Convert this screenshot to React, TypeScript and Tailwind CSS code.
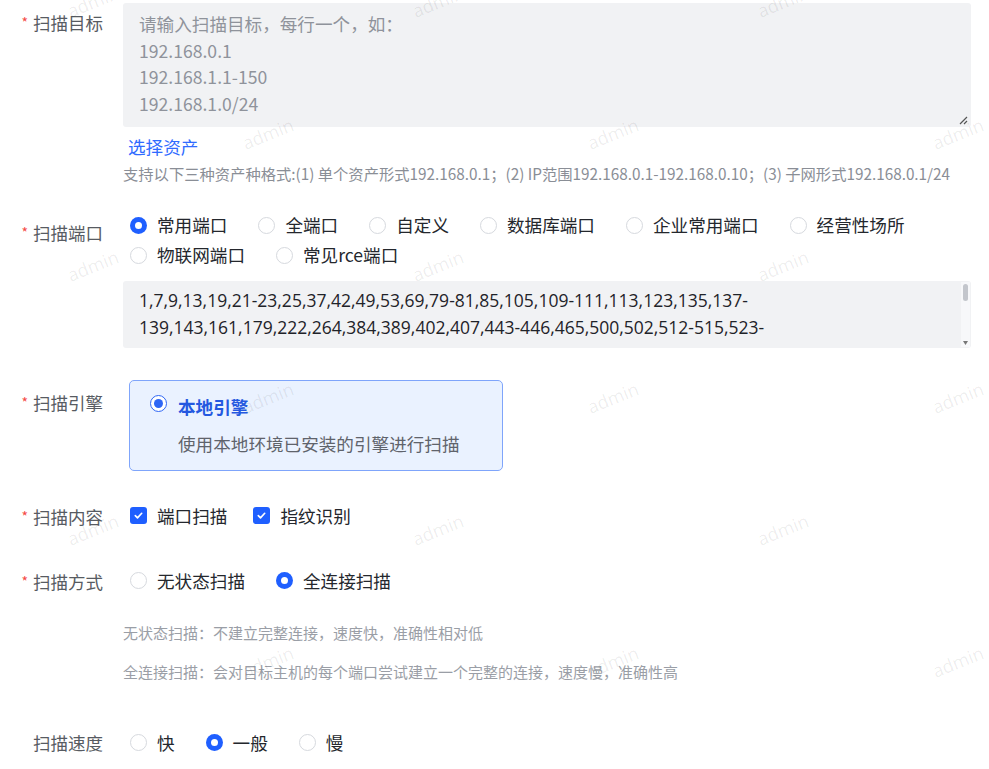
import React from 'react';

const portLines = [
  '1,7,9,13,19,21-23,25,37,42,49,53,69,79-81,85,105,109-111,113,123,135,137-',
  '139,143,161,179,222,264,384,389,402,407,443-446,465,500,502,512-515,523-',
];

const Radio = ({ checked = false }: { checked?: boolean }) =>
  checked ? (
    <span className="flex h-[17px] w-[17px] shrink-0 items-center justify-center rounded-full bg-[#1f5fff]">
      <span className="h-[7px] w-[7px] rounded-full bg-white" />
    </span>
  ) : (
    <span className="h-[17px] w-[17px] shrink-0 rounded-full border border-[#d6d9de] bg-white" />
  );

const Checkbox = () => (
  <span className="flex h-[17px] w-[17px] shrink-0 items-center justify-center rounded-[3px] bg-[#1f5fff]">
    <svg width="11" height="11" viewBox="0 0 12 12" fill="none">
      <path d="M2.5 6.2l2.4 2.4 4.6-5" stroke="white" strokeWidth="1.8" strokeLinecap="round" strokeLinejoin="round" />
    </svg>
  </span>
);

const Option = ({ text, checked }: { text: string; checked?: boolean }) => (
  <label className="flex items-center gap-[10px] whitespace-nowrap">
    <Radio checked={checked} />
    <span>{text}</span>
  </label>
);

const FieldLabel = ({ text, required = true }: { text: string; required?: boolean }) => (
  <div className="h-[44px] w-[123px] shrink-0 pr-[20px] text-right text-[17.5px] leading-[44px] text-[#575b62]">
    {required && <span className="mr-[5px] text-[14px] text-[#f54a45] align-[2px]">*</span>}
    {text}
  </div>
);

const Watermarks = () => {
  const marks: { x: number; y: number }[] = [];
  for (let row = 0; row < 7; row++) {
    const start = row % 2 === 0 ? 93 : 268;
    for (let col = 0; col < 3; col++) {
      marks.push({ x: start + col * 345, y: 2 + row * 132 });
    }
  }
  return (
    <div className="pointer-events-none absolute inset-0 overflow-hidden">
      {marks.map((m, i) => (
        <span
          key={i}
          className="absolute -translate-x-1/2 -translate-y-1/2 -rotate-[22deg] font-['Open_Sans',sans-serif] text-[18px] text-[rgba(0,0,0,0.08)]"
          style={{ left: m.x, top: m.y }}
        >
          admin
        </span>
      ))}
    </div>
  );
};

export default function App() {
  return (
    <div className="relative h-[769px] w-[989px] overflow-hidden bg-white pr-[18px] pt-[3px] font-['Noto_Sans_CJK_SC','Noto_Sans',sans-serif] text-[17.6px] text-[#24272d]">
      {/* 扫描目标 */}
      <div className="flex">
        <div className="mt-[-3px]">
          <FieldLabel text="扫描目标" />
        </div>
        <div className="flex-1">
          <div className="relative h-[124px] rounded-[3px] bg-[#f1f2f4] px-[16px] pt-[8px] leading-[26.5px] text-[#8f939b]">
            <div>请输入扫描目标，每行一个，如：</div>
            <div>192.168.0.1</div>
            <div>192.168.1.1-150</div>
            <div>192.168.1.0/24</div>
            <svg className="absolute bottom-[2px] right-[3px]" width="10" height="10" viewBox="0 0 10 10">
              <path d="M9 2L2 9M9 6L6 9" stroke="#555" strokeWidth="1.2" />
            </svg>
          </div>
          <div className="ml-[5px] mt-[7px] h-[26px] leading-[26px] text-[#2f6bff]">选择资产</div>
          <div className="mt-[2px] h-[22px] whitespace-nowrap text-[15.3px] leading-[22px] text-[#8a8e96]">
            支持以下三种资产种格式:(1) 单个资产形式192.168.0.1；(2) IP范围192.168.0.1-192.168.0.10；(3) 子网形式192.168.0.1/24
          </div>
        </div>
      </div>

      {/* 扫描端口 */}
      <div className="mt-[26px] flex">
        <FieldLabel text="扫描端口" />
        <div className="flex-1">
          <div className="ml-[7px] flex flex-wrap gap-x-[31px] leading-[30px]">
            <Option text="常用端口" checked />
            <Option text="全端口" />
            <Option text="自定义" />
            <Option text="数据库端口" />
            <Option text="企业常用端口" />
            <Option text="经营性场所" />
            <Option text="物联网端口" />
            <Option text="常见rce端口" />
          </div>
          <div className="relative mt-[11px] h-[67px] overflow-hidden rounded-[3px] bg-[#f1f2f4] px-[16px] pt-[6px] font-['Open_Sans','Noto_Sans',sans-serif] text-[17.5px] leading-[27px] text-[#1f2329]">
            {portLines.map((line) => (
              <div key={line} className="whitespace-nowrap">
                {line}
              </div>
            ))}
            <div className="absolute bottom-[1px] right-[1px] top-[1px] w-[9px] bg-[#f7f8fa]">
              <div className="mx-auto mt-[2px] h-[17px] w-[5px] rounded-full bg-[#c3c6cc]" />
              <svg className="absolute bottom-[2px] left-[2px]" width="5" height="4" viewBox="0 0 5 4">
                <path d="M0 0h5L2.5 4z" fill="#777" />
              </svg>
            </div>
          </div>
        </div>
      </div>

      {/* 扫描引擎 */}
      <div className="mt-[32px] flex">
        <FieldLabel text="扫描引擎" />
        <div className="ml-[6px] w-[374px] rounded-[5px] border border-[#7fa5fb] bg-[#eaf2ff] pb-[13px] pl-[20px] pt-[13px]">
          <div className="flex items-start gap-[11px]">
            <span className="mt-[1px] flex h-[17px] w-[17px] shrink-0 items-center justify-center rounded-full border-[1.5px] border-[#2e66f5] bg-white">
              <span className="h-[9px] w-[9px] rounded-full bg-[#2e66f5]" />
            </span>
            <div>
              <div className="h-[26px] font-bold leading-[26px] text-[#2458e0]">本地引擎</div>
              <div className="mt-[11px] h-[26px] leading-[26px] text-[#5f636b]">使用本地环境已安装的引擎进行扫描</div>
            </div>
          </div>
        </div>
      </div>

      {/* 扫描内容 */}
      <div className="mt-[23px] flex">
        <FieldLabel text="扫描内容" />
        <div className="ml-[7px] flex h-[44px] items-center">
          <label className="flex items-center gap-[10px]">
            <Checkbox />
            <span>端口扫描</span>
          </label>
          <label className="ml-[26px] flex items-center gap-[10px]">
            <Checkbox />
            <span>指纹识别</span>
          </label>
        </div>
      </div>

      {/* 扫描方式 */}
      <div className="mt-[21px] flex">
        <FieldLabel text="扫描方式" />
        <div className="flex-1">
          <div className="ml-[7px] flex h-[44px] items-center gap-x-[31px]">
            <Option text="无状态扫描" />
            <Option text="全连接扫描" checked />
          </div>
          <div className="mt-[19px] h-[22px] text-[15px] leading-[22px] text-[#9a9ea6]">
            无状态扫描：不建立完整连接，速度快，准确性相对低
          </div>
          <div className="mt-[17px] h-[22px] text-[15px] leading-[22px] text-[#9a9ea6]">
            全连接扫描：会对目标主机的每个端口尝试建立一个完整的连接，速度慢，准确性高
          </div>
        </div>
      </div>

      {/* 扫描速度 */}
      <div className="mt-[38px] flex">
        <FieldLabel text="扫描速度" required={false} />
        <div className="ml-[7px] flex h-[44px] items-center gap-x-[31px]">
          <Option text="快" />
          <Option text="一般" checked />
          <Option text="慢" />
        </div>
      </div>

      <Watermarks />
    </div>
  );
}
